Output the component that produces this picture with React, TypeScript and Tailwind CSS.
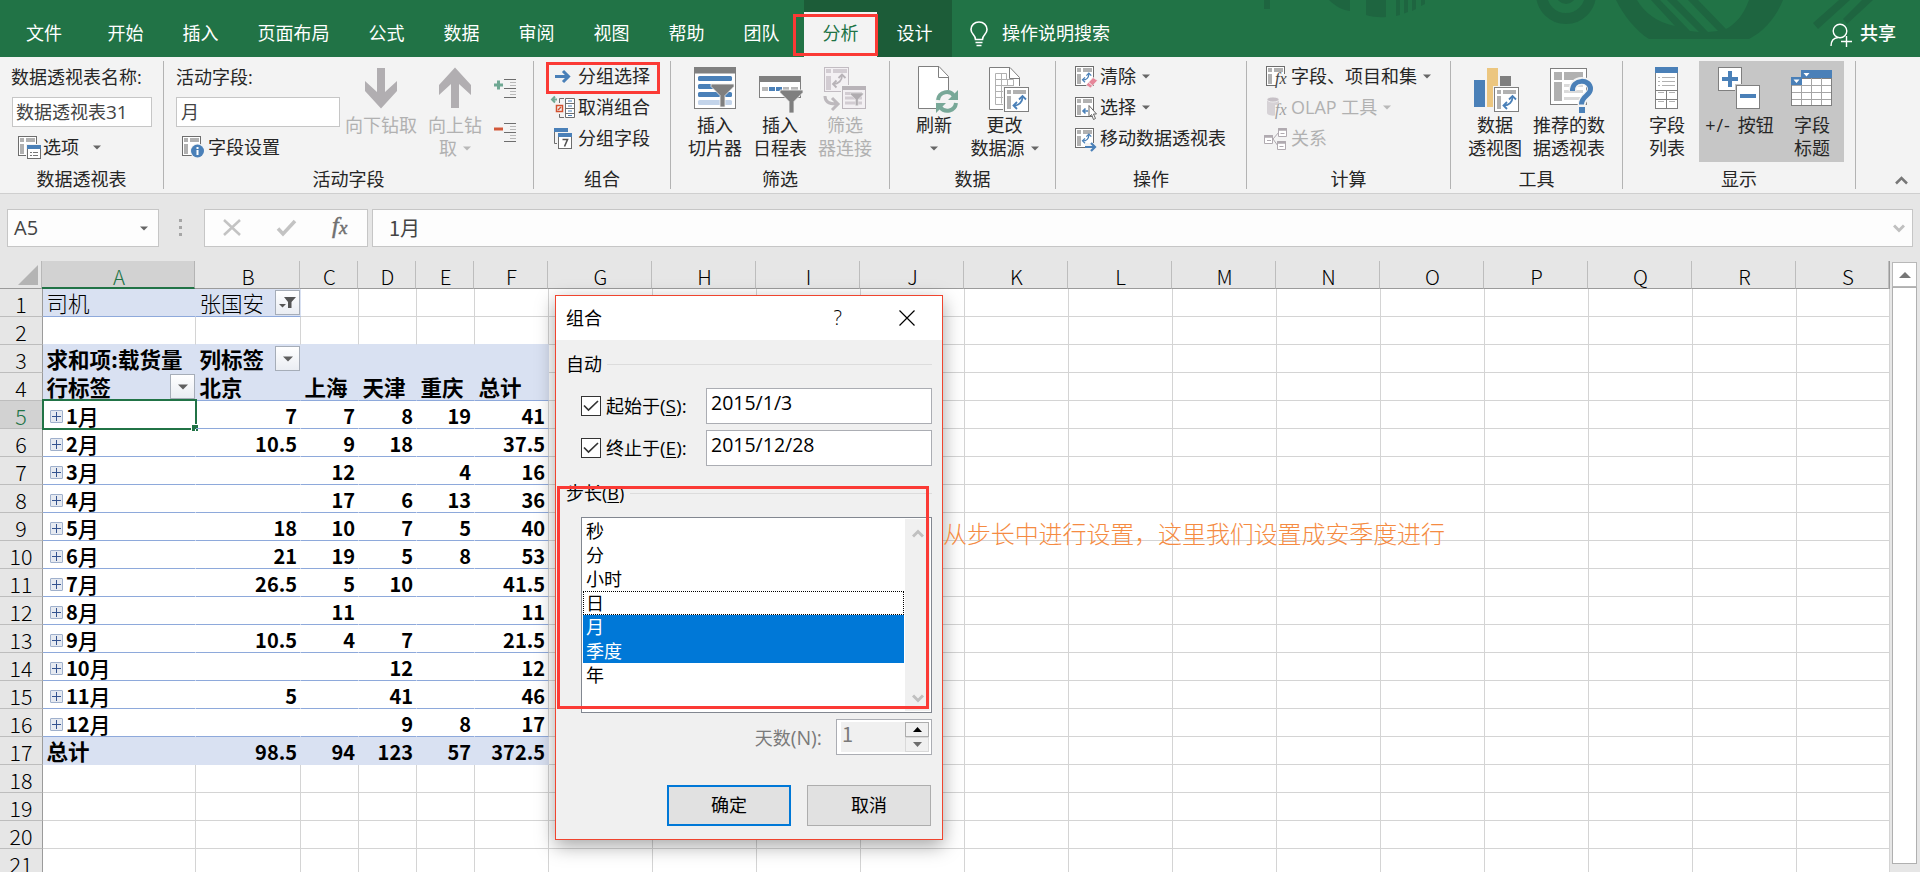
import React from "react";

const UI = "font-['Open_Sans','Noto_Sans_CJK_SC',sans-serif]";

/* ---------- small drawing helpers ---------- */

function Caret({ dim = false, className = "" }: { dim?: boolean; className?: string }) {
  return (
    <svg width="8" height="5" viewBox="0 0 8 5" className={className}>
      <path d="M0 0.5H8L4 4.5Z" fill={dim ? "#b8b8b8" : "#666"} />
    </svg>
  );
}

function Svg({ s = 24, children }: { s?: number; children: React.ReactNode }) {
  return (
    <svg width={s} height={s} viewBox={`0 0 ${s} ${s}`} fill="none" className="shrink-0 overflow-visible">
      {children}
    </svg>
  );
}

function PivotFrame() {
  return (
    <g>
      <rect x="0.5" y="1.5" width="18" height="19" fill="#fff" stroke="#6d6d6d" />
      <path d="M2 3h4v4H2zM8 3h9v4H8zM2 9h4v10H2z" fill="#b1b1b1" />
    </g>
  );
}

function Swap({ color = "#4a80b8", x = 0, y = 0, k = 1 }: { color?: string; x?: number; y?: number; k?: number }) {
  return (
    <g transform={`translate(${x} ${y}) scale(${k})`} stroke={color} strokeWidth="1.8" fill="none">
      <path d="M2 10.5C7 10.5 10.500 7 10.500 2" />
      <path d="M5 7L1.500 10.500L5 14M7 4.500L10.500 1L14 4.500" />
    </g>
  );
}

function Fx({ dim = false }: { dim?: boolean }) {
  return (
    <text x="9" y="19" fontSize="16" fontStyle="italic" fontFamily="Liberation Serif" fill={dim ? "#a0a0a0" : "#444"}>
      fx
    </text>
  );
}

function Funnel({ x, y, k = 1, fill = "#7f7f7f" }: { x: number; y: number; k?: number; fill?: string }) {
  return (
    <path
      transform={`translate(${x} ${y}) scale(${k})`}
      d="M0 0H23V2.500L14 11.500V23H9V11.500L0 2.500Z"
      fill={fill}
      stroke="#f3f3f3"
      strokeWidth="0.8"
    />
  );
}

/* ---------- small ribbon icons ---------- */

const OptionsIcon = () => (
  <Svg>
    <PivotFrame />
    <rect x="8" y="9" width="16" height="16" fill="#f3f3f3" />
    <rect x="9.500" y="10.500" width="13" height="13" fill="#fff" stroke="#6d6d6d" />
    <rect x="9" y="10" width="14" height="4" fill="#4a80b8" />
    <path d="M12 17.500h2M12 20.500h2M15 17.500h5M15 20.500h5" stroke="#777" />
  </Svg>
);
const FieldSettingsIcon = () => (
  <Svg>
    <PivotFrame />
    <circle cx="15.500" cy="16" r="7.500" fill="#f3f3f3" />
    <circle cx="15.500" cy="16" r="6.500" fill="#4a80b8" />
    <path d="M15.500 12v2M15.500 15v5" stroke="#fff" strokeWidth="2" />
  </Svg>
);
const GroupSelIcon = () => (
  <Svg>
    <path d="M4 11.500H17M12 6L17.500 11.500L12 17" stroke="#4a80b8" strokeWidth="3" />
  </Svg>
);
const UngroupIcon = () => (
  <Svg>
    <path d="M6 3.500H1M4 0.500L1 3.500L4 6.500" stroke="#6fa893" strokeWidth="2" />
    <rect x="5.500" y="9.500" width="6" height="6" stroke="#d2502f" strokeWidth="1.500" />
    <path d="M7 14l3-3" stroke="#d2502f" strokeWidth="1.500" />
    <path d="M13 2.500H8.500V7M8.500 18V21.500H13" stroke="#6d6d6d" />
    <path d="M14.500 2.500h9v19h-9zM14.500 7.500h9M14.500 12.500h9M14.500 17.500h9" fill="#fff" stroke="#6d6d6d" />
    <path d="M17 5h4M17 10h4M17 15h4M17 19.500h4" stroke="#4a80b8" strokeWidth="1.200" />
  </Svg>
);
const GroupFieldIcon = () => (
  <Svg>
    <path d="M6 16.500H3.500V3" stroke="#6d6d6d" />
    <rect x="3" y="1" width="14" height="4" fill="#4a80b8" />
    <rect x="6" y="5" width="16" height="17" fill="#f3f3f3" />
    <rect x="7.500" y="6.500" width="13" height="15" fill="#fff" stroke="#6d6d6d" />
    <rect x="7" y="6" width="14" height="4" fill="#4a80b8" />
    <path d="M11.500 12.500h5l-3 7" stroke="#555" strokeWidth="1.600" />
  </Svg>
);
const ClearIcon = () => (
  <Svg>
    <PivotFrame />
    <Swap x={6.500} y={7.500} k={0.700} />
    <path d="M11 20L18 12.500L22.500 15.500L15.500 23Z" fill="#e6879a" stroke="#f3f3f3" strokeWidth="0.700" />
    <path d="M13.500 17.300L17.500 20.700" stroke="#f3f3f3" />
  </Svg>
);
const SelectIcon = () => (
  <Svg>
    <PivotFrame />
    <path d="M8 15h5M10.500 12.500L8 15L10.500 17.500" stroke="#4a80b8" strokeWidth="1.600" />
    <path d="M14 9.500V21L16.500 18.500L18.500 23.500L20.500 22.500L18.500 18H21.500Z" fill="#fff" stroke="#666" />
  </Svg>
);
const MoveIcon = () => (
  <Svg>
    <PivotFrame />
    <Swap x={6.500} y={6.500} k={0.700} />
    <rect x="10" y="16" width="13" height="6" fill="#f3f3f3" />
    <path d="M10 20H19M16 16L20 20L16 24" stroke="#4a80b8" strokeWidth="2.200" />
  </Svg>
);
const CalcIcon = () => (
  <Svg>
    <PivotFrame />
    <rect x="10" y="9" width="10" height="13" fill="#f3f3f3" />
    <Fx />
  </Svg>
);
const OlapIcon = () => (
  <Svg>
    <path d="M1 4V17C1 20.500 13 20.500 13 17V4Z" fill="#d6d2d6" />
    <ellipse cx="7" cy="3.500" rx="6" ry="2.500" fill="#c6c0c6" stroke="#f3f3f3" strokeWidth="0.800" />
    <rect x="9" y="9" width="10" height="13" fill="#f3f3f3" />
    <Fx dim />
  </Svg>
);
const RelationIcon = () => (
  <Svg>
    <g stroke="#b0aab0">
      <path d="M7 12L13 5M7 12L12 19" />
      <path d="M-1.500 8.500h8v8h-8zM12.500 1.500h8v8h-8zM11.500 14.500h8v8h-8z" fill="#fff" />
      <path d="M-2 9.500h9M12 2.500h9M11 15.500h9" strokeWidth="2.500" />
      <path d="M1 13.500h4M14.500 6.500h4M13.500 19.500h4" />
    </g>
  </Svg>
);
function ExpandIcon({ plus = false }: { plus?: boolean }) {
  return (
    <svg width="22" height="20" viewBox="0 0 22 20" fill="none">
      {plus ? (
        <path d="M0 6H9M4.500 1.500V10.500" stroke="#6fa893" strokeWidth="3" />
      ) : (
        <path d="M0 6H9" stroke="#d2583a" strokeWidth="3" />
      )}
      <path d="M10 0.500H22M10 9.500H22M10 18.500H22" stroke="#6d6d6d" />
      <path d="M16 3.500H22M16 6.500H22M16 12.500H22M16 15.500H22" stroke="#b8b8b8" />
    </svg>
  );
}

/* ---------- large ribbon icons ---------- */

const DrillDown = () => (
  <Svg s={46}>
    <path d="M19 3h8v24l12-11v10L23 43.500L7 26V16l12 11Z" fill="#b1aeb1" />
  </Svg>
);
const DrillUp = () => (
  <Svg s={46}>
    <path d="M19 43h8V19l12 11V20L23 2.500L7 20v10l12-11Z" fill="#b1aeb1" />
  </Svg>
);
const SlicerIcon = () => (
  <Svg s={46}>
    <rect x="2.500" y="2.500" width="41" height="41" fill="#fff" stroke="#7f7f7f" />
    <rect x="2" y="2" width="42" height="6.500" fill="#7f7f7f" />
    <g fill="#4a80b8">
      <rect x="6" y="11" width="34" height="5" rx="1.500" />
      <rect x="6" y="19" width="34" height="5" rx="1.500" />
      <rect x="6" y="27" width="34" height="5" rx="1.500" />
    </g>
    <rect x="6" y="35" width="34" height="5" rx="1.500" fill="#c3d4ea" />
    <Funnel x={19} y={19} />
  </Svg>
);
const TimelineIcon = () => (
  <Svg s={46}>
    <rect x="2.500" y="11.500" width="41" height="21" fill="#fff" stroke="#7f7f7f" />
    <rect x="2" y="11" width="42" height="6" fill="#7f7f7f" />
    <path d="M5 22h6v4H5zM26 22h6v4h-6zM34 22h7v4h-7z" fill="#b8b8b8" />
    <path d="M12 22h6v4h-6zM19 22h6v4h-6z" fill="#4a80b8" />
    <Funnel x={23} y={25} />
  </Svg>
);
const FilterConnIcon = () => (
  <Svg s={46}>
    <rect x="2.500" y="2.500" width="24" height="24" fill="#f3f0f3" stroke="#c2bcc2" />
    <path d="M4 4h5v4H4zM11 4h14v4H11zM4 11h5v14H4z" fill="#d2ccd2" />
    <Swap x={9.500} y={8.500} color="#b8b3b8" />
    <rect x="19" y="20" width="26" height="25" fill="#f3f3f3" />
    <rect x="20.500" y="21.500" width="23" height="22" fill="#f3f0f3" stroke="#bcb6bc" />
    <rect x="20" y="21" width="24" height="4" fill="#b8b3b8" />
    <path d="M23 28.500h17M23 33h17M23 38h17" stroke="#d2ccd2" strokeWidth="3" />
    <Funnel x={28.500} y={28} k={0.550} fill="#b0acb0" />
    <path d="M3 31C3 37 7 39 14 39M10 33L16 39L10 45" stroke="#bdb9bd" strokeWidth="3" />
  </Svg>
);
const RefreshIcon = () => (
  <Svg s={46}>
    <path d="M7.500 1.500H28L37.500 11.500V43.500H7.500Z" fill="#fff" stroke="#7f7f7f" />
    <path d="M27.500 1.500V12.500H37.500" stroke="#7f7f7f" />
    <circle cx="36" cy="36.500" r="11.500" fill="#f3f3f3" />
    <g stroke="#78a898" strokeWidth="4">
      <path d="M27 35C28 26.500 39 24.500 43 31" />
      <path d="M45 38C44 46 34 48.500 29 42" />
    </g>
    <path d="M47 25V35H37ZM25 48V38H35Z" fill="#78a898" />
  </Svg>
);
const ChangeSourceIcon = () => (
  <Svg s={46}>
    <path d="M7.500 2.500H28L37.500 12.500V44.500H7.500Z" fill="#fff" stroke="#7f7f7f" />
    <path d="M27.500 2.500V13.500H37.500" stroke="#7f7f7f" />
    <path d="M13.500 8.500h11v6h7v25h-18zM13.500 14.500h12M13.500 20.500h18M13.500 26.500h18M13.500 32.500h18M19.500 8.500v30M25.500 14.500v24" stroke="#b1b1b1" />
    <rect x="21" y="21" width="27" height="27" fill="#f3f3f3" />
    <rect x="22.500" y="22.500" width="24" height="24" fill="#fff" stroke="#7f7f7f" />
    <path d="M25 25h4v4h-4zM31 25h13v4H31zM25 31h4v13h-4z" fill="#b1b1b1" />
    <Swap x={30} y={30} />
  </Svg>
);
const PivotChartIcon = () => (
  <Svg s={46}>
    <rect x="2" y="15" width="11" height="27" fill="#4a80b8" />
    <rect x="15" y="3" width="11" height="39" fill="#ecc67f" />
    <rect x="28" y="11" width="11" height="20" fill="#7f7f7f" />
    <rect x="21" y="21" width="27" height="27" fill="#f3f3f3" />
    <rect x="22.500" y="22.500" width="24" height="24" fill="#fff" stroke="#7f7f7f" />
    <path d="M25 25h4v4h-4zM31 25h13v4H31zM25 31h4v13h-4z" fill="#b1b1b1" />
    <Swap x={30} y={30} />
  </Svg>
);
const RecommendIcon = () => (
  <Svg s={46}>
    <rect x="4.500" y="3.500" width="36" height="36" fill="#fff" stroke="#7f7f7f" />
    <path d="M8 7h8v8H8zM18 7h19v8H18zM8 17h8v19H8z" fill="#b1b1b1" />
    <path d="M18 19h19v3H18zM18 25h19v3H18zM18 32h19v3H18z" fill="#dadada" />
    <path d="M26.500 26C26 12.500 45 13.500 45 24C45 31.500 35.500 30 35.500 41" stroke="#f3f3f3" strokeWidth="8" />
    <rect x="31" y="40" width="9" height="8" fill="#f3f3f3" />
    <path d="M26.500 26C26 13.500 44.500 13.500 44.500 24C44.500 31 35.500 30.500 35.500 39.500" stroke="#4a80b8" strokeWidth="5" />
    <rect x="33" y="42" width="6" height="6" fill="#4a80b8" />
  </Svg>
);
const FieldListIcon = () => (
  <Svg s={46}>
    <rect x="11.500" y="2.500" width="22" height="41" fill="#fff" stroke="#7f7f7f" />
    <rect x="11" y="2" width="23" height="6" fill="#4a80b8" />
    <path d="M14 12.500h2M18 12.500h13M14 16.500h2M18 16.500h13M14 20.500h2M18 20.500h13" stroke="#b1b1b1" />
    <path d="M11 25.500h23M11 34.500h23M22.500 25v19" stroke="#7f7f7f" />
    <path d="M14 27.500h6M25 27.500h6M14 36.500h6M25 36.500h6" stroke="#b1b1b1" />
  </Svg>
);
const PlusMinusIcon = () => (
  <Svg s={46}>
    <rect x="1.500" y="2.500" width="23" height="23" fill="#fff" stroke="#7f7f7f" />
    <path d="M5 14h16M13 6v16" stroke="#4a80b8" strokeWidth="4" />
    <rect x="18" y="19" width="25" height="25" fill="#c6c6c6" />
    <rect x="19.500" y="20.500" width="23" height="23" fill="#fff" stroke="#7f7f7f" />
    <path d="M23 31h16" stroke="#4a80b8" strokeWidth="4" />
  </Svg>
);
const FieldHeadersIcon = () => (
  <Svg s={46}>
    <rect x="2.500" y="13.500" width="40" height="27" fill="#fff" stroke="#7f7f7f" />
    <path d="M3 20.500h39M3 27.500h39M3 34.500h39M12.500 13v27M22.500 13v27M32.500 13v27" stroke="#a5a5a5" />
    <path d="M12 5h31v8H12zM2 12h11v8H2z" fill="#4a80b8" />
    <path d="M14.500 8h6l-3 3.500zM4.500 14.500h6l-3 3.500z" fill="#fff" />
  </Svg>
);

/* ---------- ribbon building blocks ---------- */

function Group({ w, label, children }: { w: string; label: string; children: React.ReactNode }) {
  return (
    <section className={`${w} flex h-[128px] shrink-0 flex-col border-r border-[#b3b3b3]`}>
      <div className="flex h-[108px]">{children}</div>
      <div className="h-5 text-center leading-[21px]">{label}</div>
    </section>
  );
}

function Big({ w, icon, lines, dim = false, caret = false }: {
  w: string; icon: React.ReactNode; lines: string[]; dim?: boolean; caret?: boolean;
}) {
  return (
    <div className={`${w} flex shrink-0 flex-col items-center pt-1 ${dim ? "text-[#b1b1b1]" : ""}`}>
      {icon}
      <div className="mt-[3px] flex flex-col items-center leading-[23px] whitespace-nowrap">
        {lines.map((l, i) => (
          <div key={i} className="flex h-[23px] items-center">
            {l}
            {caret && i === lines.length - 1 && <Caret dim={dim} className={l ? "ml-[6px]" : ""} />}
          </div>
        ))}
      </div>
    </div>
  );
}

function Small({ icon, text, gap = "w-[25px]", dim = false, caret = false }: {
  icon: React.ReactNode; text: string; gap?: string; dim?: boolean; caret?: boolean;
}) {
  return (
    <div className={`flex h-[31px] items-center whitespace-nowrap leading-[31px] ${dim ? "text-[#b1b1b1]" : ""}`}>
      <span className={`${gap} shrink-0`}>{icon}</span>
      {text}
      {caret && <Caret dim={dim} className="ml-[6px]" />}
    </div>
  );
}

/* ---------- title / tabs ---------- */

const TABS = ["开始", "插入", "页面布局", "公式", "数据", "审阅", "视图", "帮助", "团队"];

function TabBar() {
  return (
    <header className="relative h-[57px] shrink-0 bg-[#217346] text-white">
      <svg className="absolute left-[1240px] top-0" width="680" height="57" viewBox="1240 0 680 57" fill="none">
        <g fill="#1e6540">
          <path d="M1264 0h6v9h-6z" />
          <path d="M1329 0C1335 6 1342 10 1350 11V0Z" />
          <path d="M1366 0h20v17C1380 17.500 1372 17 1366 15Z" />
          <path d="M1396 0h4v15l-4 1zM1404 0h4v12l-4 1.500zM1412 0h4v9l-4 2zM1421 0h4v4l-4 2z" />
          <path d="M1616 0C1624 16 1636 31 1649 39H1749C1765 31 1776 17 1783 0H1749C1744 14 1736 24 1726 29L1698 0H1688L1718 31L1708 32L1677 0H1667L1699 32L1690 31L1660 0H1651L1675 26C1656 22 1644 12 1637 0Z" />
          <path d="M1813 23L1839 0H1850L1818 29ZM1843 19L1862 0H1873L1847 24Z" />
        </g>
        <circle cx="1566" cy="-6" r="24.500" stroke="#1e6540" strokeWidth="11" />
        <circle cx="1566" cy="-6" r="10" fill="#1e6540" />
      </svg>
      <nav className="flex h-[57px] items-stretch pt-3 leading-[43px]">
        <div className="w-[88px] text-center">文件</div>
        {TABS.map((t) => (
          <div key={t} className="px-[19.500px]">{t}</div>
        ))}
        <div className="-mt-3 ml-[5px] flex w-[148px] bg-[#1c5c38] pt-3">
          <div className="w-[73px] bg-[#f3f3f3] text-center text-[#217346]">分析</div>
          <div className="w-[75px] text-center">设计</div>
        </div>
        <div className="flex grow pl-[18px]">
          <svg width="18" height="26" viewBox="0 0 18 26" fill="none" className="mt-[9px]" stroke="#fff" strokeWidth="1.600">
            <path d="M5.500 18.500C5.500 13.500 1 13.500 1 8.500C1 4 4.500 1 9 1S17 4 17 8.500C17 13.500 12.500 13.500 12.500 18.500Z" />
            <path d="M5.500 21.500H12.500M6.500 24.500H11.500" />
          </svg>
          <div className="ml-[14px]">操作说明搜索</div>
        </div>
        <div className="flex pr-[24px] font-medium">
          <svg width="23" height="24" viewBox="0 0 23 24" fill="none" stroke="#fff" strokeWidth="1.400" className="mr-[7px] mt-[11px]">
            <circle cx="10" cy="8" r="6.800" />
            <path d="M1 23C1 18 4 15 8 14.500M16.500 13V24M11 18.500H22" />
          </svg>
          共享
        </div>
      </nav>
      <div className="absolute left-[793px] top-[14px] h-[42px] w-[85px] border-3 border-[#fb3a35]" />
    </header>
  );
}

function Ribbon() {
  return (
    <div className="relative flex h-[137px] shrink-0 border-b border-[#cfcfcf] bg-[#f3f3f3] pt-1 text-[#262626]">
      <Group w="w-[164px]" label="数据透视表">
        <div className="ml-[11px] w-[141px]">
          <div className="h-[31px] leading-[32px] whitespace-nowrap">数据透视表名称:</div>
          <div className="ml-px mt-[5px] h-[30px] border border-[#c6c6c6] bg-white pl-[3px] leading-[29px] text-[#444]">
            数据透视表<span className="text-[19px]">31</span>
          </div>
          <div className="flex h-10 items-center pl-[7px] leading-[39px]">
            <span className="w-[25px]"><OptionsIcon /></span>选项<Caret className="ml-[14px]" />
          </div>
        </div>
      </Group>
      <Group w="w-[370px]" label="活动字段">
        <div className="ml-3 w-[164px]">
          <div className="h-[31px] leading-[32px]">活动字段:</div>
          <div className="mt-[5px] h-[30px] border border-[#c6c6c6] bg-white pl-[4px] leading-[29px] text-[#444]">月</div>
          <div className="flex h-10 items-center pl-[6px] leading-[39px]">
            <span className="w-[26px]"><FieldSettingsIcon /></span>字段设置
          </div>
        </div>
        <div className="ml-[3px] flex">
          <Big w="w-[76px]" dim icon={<DrillDown />} lines={["向下钻取"]} />
          <Big w="w-[72px]" dim caret icon={<DrillUp />} lines={["向上钻", "取"]} />
        </div>
        <div className="ml-[3px] flex flex-col gap-6 pt-[18px]">
          <ExpandIcon plus />
          <ExpandIcon />
        </div>
      </Group>
      <Group w="w-[137px]" label="组合">
        <div className="ml-[17px]">
          <Small gap="w-[27px]" icon={<GroupSelIcon />} text="分组选择" />
          <Small gap="w-[27px]" icon={<UngroupIcon />} text="取消组合" />
          <Small gap="w-[27px]" icon={<GroupFieldIcon />} text="分组字段" />
        </div>
      </Group>
      <Group w="w-[219px]" label="筛选">
        <div className="ml-[11.500px] flex">
          <Big w="w-[65px]" icon={<SlicerIcon />} lines={["插入", "切片器"]} />
          <Big w="w-[65px]" icon={<TimelineIcon />} lines={["插入", "日程表"]} />
          <Big w="w-[65px]" dim icon={<FilterConnIcon />} lines={["筛选", "器连接"]} />
        </div>
      </Group>
      <Group w="w-[166px]" label="数据">
        <div className="ml-[9px] flex">
          <Big w="w-[70px]" caret icon={<RefreshIcon />} lines={["刷新", ""]} />
          <Big w="w-[71px]" caret icon={<ChangeSourceIcon />} lines={["更改", "数据源"]} />
        </div>
      </Group>
      <Group w="w-[191px]" label="操作">
        <div className="ml-[19px]">
          <Small caret icon={<ClearIcon />} text="清除" />
          <Small caret icon={<SelectIcon />} text="选择" />
          <Small icon={<MoveIcon />} text="移动数据透视表" />
        </div>
      </Group>
      <Group w="w-[204px]" label="计算">
        <div className="ml-[19px]">
          <Small caret icon={<CalcIcon />} text="字段、项目和集" />
          <Small dim caret icon={<OlapIcon />} text="OLAP 工具" />
          <Small dim icon={<RelationIcon />} text="关系" />
        </div>
      </Group>
      <Group w="w-[172px]" label="工具">
        <div className="ml-[7px] flex">
          <Big w="w-[74px]" icon={<PivotChartIcon />} lines={["数据", "透视图"]} />
          <Big w="w-[74px]" icon={<RecommendIcon />} lines={["推荐的数", "据透视表"]} />
        </div>
      </Group>
      <Group w="w-[233px]" label="显示">
        <div className="ml-3 flex">
          <Big w="w-[64px]" icon={<FieldListIcon />} lines={["字段", "列表"]} />
          <div className="flex h-[101px] bg-[#c6c6c6]">
            <div className="flex w-[81px] shrink-0 flex-col items-center pt-1">
              <PlusMinusIcon />
              <div className="mt-[3px] flex leading-[23px] whitespace-nowrap">
                <span className="mr-[7px] tracking-[0.900px]">+/-</span>按钮
              </div>
            </div>
            <Big w="w-[64px]" icon={<FieldHeadersIcon />} lines={["字段", "标题"]} />
          </div>
        </div>
      </Group>
      <div className="flex grow items-end justify-end pb-[8px] pr-[12px]">
        <svg width="13" height="9" viewBox="0 0 13 9" fill="none">
          <path d="M1 7.500L6.500 2L12 7.500" stroke="#777" strokeWidth="2.500" />
        </svg>
      </div>
      <div className="absolute left-[546px] top-[5px] h-[32px] w-[114px] border-3 border-[#fb3a35]" />
    </div>
  );
}

function FormulaBar() {
  return (
    <div className="flex h-[67px] shrink-0 items-start bg-[#e6e6e6] pl-[7px] pt-[15px] text-[#444]">
      <div className="flex h-[38px] w-[152px] items-center justify-between border border-[#c6c6c6] bg-[#fdfdfd] pl-[6px] pr-[10px] text-[20px]">
        A5
        <Caret />
      </div>
      <div className="ml-[20px] mt-[10px] flex w-[3px] flex-col gap-1">
        <i className="h-[3px] bg-[#a6a6a6]" />
        <i className="h-[3px] bg-[#a6a6a6]" />
        <i className="h-[3px] bg-[#a6a6a6]" />
      </div>
      <div className="ml-[22px] flex h-[38px] w-[164px] items-center border border-[#c6c6c6] bg-[#fdfdfd]">
        <svg width="162" height="36" viewBox="0 0 162 36" fill="none">
          <path d="M19 10L35 25M35 10L19 25" stroke="#c3c3c3" strokeWidth="2.500" />
          <path d="M73 18.500L78 24L90 11" stroke="#c3c3c3" strokeWidth="3.500" />
          <text x="127" y="23" fontSize="24" fontStyle="italic" fontFamily="Liberation Serif" fill="#707070" stroke="#707070" strokeWidth="0.500">f</text>
          <text x="134" y="24" fontSize="19" fontStyle="italic" fontFamily="Liberation Serif" fill="#707070" stroke="#707070" strokeWidth="0.500">x</text>
        </svg>
      </div>
      <div className="ml-1 flex h-[38px] w-[1541px] items-center justify-between border border-[#c6c6c6] bg-[#fdfdfd] pl-[16px] pr-[7px]">
        <span className="font-['Noto_Sans_CJK_SC',sans-serif] text-[20px] leading-[34px]">1月</span>
        <svg width="12" height="9" viewBox="0 0 12 9" fill="none">
          <path d="M1 1.500L6 6.500L11 1.500" stroke="#c0c0c0" strokeWidth="3" />
        </svg>
      </div>
    </div>
  );
}

/* ---------- worksheet ---------- */

const COLS: { id: string; w: string }[] = [
  { id: "A", w: "w-[153px]" },
  { id: "B", w: "w-[105px]" },
  { id: "C", w: "w-[58px]" },
  { id: "D", w: "w-[58px]" },
  { id: "E", w: "w-[58px]" },
  { id: "F", w: "w-[74px]" },
  ..."GHIJKLMNOPQR".split("").map((id) => ({ id, w: "w-[104px]" })),
  { id: "S", w: "w-[93px]" },
];

const DATA: Record<number, string[]> = {
  1: ["司机", "张国安"],
  3: ["求和项:载货量", "列标签"],
  4: ["行标签", "北京", "上海", "天津", "重庆", "总计"],
  5: ["1月", "7", "7", "8", "19", "41"],
  6: ["2月", "10.5", "9", "18", "", "37.5"],
  7: ["3月", "", "12", "", "4", "16"],
  8: ["4月", "", "17", "6", "13", "36"],
  9: ["5月", "18", "10", "7", "5", "40"],
  10: ["6月", "21", "19", "5", "8", "53"],
  11: ["7月", "26.5", "5", "10", "", "41.5"],
  12: ["8月", "", "11", "", "", "11"],
  13: ["9月", "10.5", "4", "7", "", "21.5"],
  14: ["10月", "", "", "12", "", "12"],
  15: ["11月", "5", "", "41", "", "46"],
  16: ["12月", "", "", "9", "8", "17"],
  17: ["总计", "98.5", "94", "123", "57", "372.5"],
};

function cellBorder(r: number, c: number): string {
  if (r === 1 && c < 2) return "bg-[#d9e1f2] border-b-[#8ea9db] border-r-[#d9e1f2]";
  if ((r === 3 || r === 17) && c < 6) return "bg-[#d9e1f2] border-[#d9e1f2]";
  if (r === 4 && c < 6) return "bg-[#d9e1f2] border-b-[#8ea9db] border-r-[#d9e1f2]";
  if (r === 2 && c < 6) return "border-b-[#d9e1f2] border-r-[#d4d4d4]";
  if (r >= 5 && r <= 16 && c < 5) return "border-b-[#8ea9db] border-r-white";
  if (r >= 5 && r <= 16 && c === 5) return "border-b-[#8ea9db] border-r-[#d4d4d4]";
  return "border-[#d4d4d4]";
}

function DropButton({ filtered = false }: { filtered?: boolean }) {
  return (
    <span className="ml-auto mt-[1px] flex h-[25px] w-[25px] shrink-0 items-center justify-center border border-[#a6adb8] bg-linear-to-b from-white to-[#eaedf3]">
      {filtered ? (
        <svg width="17" height="14" viewBox="0 0 17 14">
          <path d="M5 1H17L12.500 6V12H9V6Z" fill="#555" />
          <path d="M0 8H7L3.500 11.500Z" fill="#555" />
        </svg>
      ) : (
        <svg width="10" height="6" viewBox="0 0 10 6"><path d="M0 0.500H10L5 5.500Z" fill="#5f5f5f" /></svg>
      )}
    </span>
  );
}

function Cell({ r, c }: { r: number; c: number }) {
  const text = DATA[r]?.[c] ?? "";
  const base = `relative flex h-7 shrink-0 whitespace-nowrap border-b ${COLS[c].w} ${cellBorder(r, c)} border-r`;
  if (r >= 5 && r <= 16 && c === 0) {
    return (
      <div className={`${base} pl-[7px] font-bold`}>
        <span className="mt-[9px] flex h-[13px] w-[13px] items-center justify-center rounded-[1px] border border-[#9fb0cc] bg-[#e6eaf1]">
          <svg width="9" height="9" viewBox="0 0 9 9"><path d="M0 4.500H9M4.500 0V9" stroke="#33528f" /></svg>
        </span>
        <span className="ml-[3px] text-[20px] leading-[30px]">{text.replace("月", "")}</span>
        <span className="text-[21px] font-medium leading-[30px]">月</span>
        {r === 5 && (
          <>
            <span className="absolute -left-px -top-[2px] h-[31px] w-[155px] border-2 border-[#217346]" />
            <span className="absolute -right-[3px] top-[23px] h-[7px] w-[7px] border-l border-t border-white bg-[#217346]" />
          </>
        )}
      </div>
    );
  }
  if (r >= 5 && c > 0) {
    return <div className={`${base} justify-end pr-[3px] text-[20px] font-bold leading-[30px]`}>{text}</div>;
  }
  return (
    <div className={`${base} pl-[3.500px] text-[21.500px] leading-[28px] ${r > 1 ? "font-bold" : "font-light"}`}>
      {text}
      {r === 1 && c === 1 && <DropButton filtered />}
      {((r === 3 && c === 1) || (r === 4 && c === 0)) && <DropButton />}
    </div>
  );
}

function Sheet() {
  const rows = Array.from({ length: 21 }, (_, i) => i + 1);
  return (
    <div className="flex grow overflow-hidden bg-[#e6e6e6] font-['Noto_Sans_CJK_SC',sans-serif] text-black">
      <div className="w-[1890px] shrink-0 border-r border-[#9b9b9b]">
        <div className="flex h-7 text-[20.500px] leading-[31px]">
          <div className="flex w-[43px] items-end justify-end border-b border-r border-[#9b9b9b] border-r-[#b8b8b8] pb-[3px] pr-[3px]">
            <svg width="20" height="20" viewBox="0 0 20 20"><path d="M20 0V20H0Z" fill="#b4b4b4" /></svg>
          </div>
          {COLS.map((c) => (
            <div
              key={c.id}
              className={`${c.w} shrink-0 border-b border-r text-center font-light ${c.id === "S" ? "pl-[12px]" : "pl-[2px]"} ${
                c.id === "A" ? "border-b-2 border-b-[#217346] border-r-[#b4b4b4] bg-[#d2d2d2] text-[#217346]" : "border-b-[#9b9b9b] border-r-[#bdbdbd]"
              }`}
            >
              {c.id}
            </div>
          ))}
        </div>
        {rows.map((r) => (
          <div key={r} className="flex h-7 bg-white">
            <div
              className={`w-[43px] shrink-0 border-b border-r border-b-[#bdbdbd] border-r-[#9b9b9b] text-center text-[21.500px] font-light leading-[30px] ${
                r === 5 ? "bg-[#d2d2d2] text-[#217346]" : "bg-[#e6e6e6]"
              }`}
            >
              {r}
            </div>
            {COLS.map((c, i) => (
              <Cell key={c.id} r={r} c={i} />
            ))}
          </div>
        ))}
      </div>
      <div className="ml-[2px] flex w-[25px] flex-col pt-[1px]">
        <div className="flex h-[25px] items-center justify-center border border-[#b8b8b8] bg-white">
          <svg width="12" height="6" viewBox="0 0 12 6"><path d="M0 6H12L6 0Z" fill="#777" /></svg>
        </div>
        <div className="h-[577px] border border-[#b0b0b0] bg-white" />
      </div>
    </div>
  );
}

/* ---------- dialog ---------- */

function CheckRow({ label, k, value }: { label: string; k: string; value: string }) {
  return (
    <div className="flex h-9 items-center pl-[25px]">
      <span className="flex h-5 w-5 items-center justify-center border border-[#333] bg-white">
        <svg width="16" height="12" viewBox="0 0 16 12" fill="none"><path d="M1 5.500L5.500 10L15 1" stroke="#333" strokeWidth="1.700" /></svg>
      </span>
      <span className="ml-[5px] w-[100px] whitespace-nowrap">
        {label}<span className="text-[19px]">(<u className="underline-offset-2">{k}</u>):</span>
      </span>
      <span className="h-9 w-[226px] border border-[#abadb3] bg-white pl-[4px] text-[19.500px] leading-[27px]">{value}</span>
    </div>
  );
}

const STEPS = ["秒", "分", "小时", "日", "月", "季度", "年"];

function stepClass(s: string): string {
  if (s === "月" || s === "季度") return "bg-[#0078d7] text-white border-[#0078d7]";
  if (s === "日") return "border-black border-dotted";
  return "border-transparent";
}

function Dialog() {
  return (
    <div className="absolute left-[555px] top-[295px] h-[545px] w-[388px] border border-[#f0452f] bg-[#f0f0f0] text-black shadow-[0_6px_18px_rgba(0,0,0,0.35)]">
      <div className="flex h-[44px] items-center bg-white pl-[10px]">
        <span className="leading-[42px]">组合</span>
        <span className="ml-auto text-[20px] font-light leading-[42px]">?</span>
        <svg width="16" height="16" viewBox="0 0 16 16" className="ml-[57px] mr-[27px]"><path d="M0.500 0.500L15.500 15.500M15.500 0.500L0.500 15.500" stroke="#000" strokeWidth="1.200" /></svg>
      </div>
      <div className="mt-[12px] flex h-6 items-center pl-[10px] pr-[10px] leading-6">
        自动<span className="ml-[5px] h-px grow bg-[#dcdcdc]" />
      </div>
      <div className="mt-[12px] flex flex-col gap-[6px]">
        <CheckRow label="起始于" k="S" value="2015/1/3" />
        <CheckRow label="终止于" k="E" value="2015/12/28" />
      </div>
      <div className="mt-[15px] flex h-6 items-center pl-[10px] pr-[10px] leading-6">
        步长(<u className="underline-offset-2">B</u>)<span className="ml-[6px] h-px grow bg-[#dcdcdc]" />
      </div>
      <div className="ml-[25px] mt-[12px] flex h-[196px] w-[351px] border border-[#828790] bg-white p-px">
        <div className="w-[321px]">
          {STEPS.map((s) => (
            <div key={s} className={`h-6 border pl-[2px] leading-[22px] ${stepClass(s)}`}>{s}</div>
          ))}
        </div>
        <div className="ml-[1px] flex grow flex-col items-center justify-between bg-[#f0f0f0] pb-2 pt-[10px]">
          <svg width="12" height="9" viewBox="0 0 12 9" fill="none"><path d="M1 7.500L6 2.500L11 7.500" stroke="#c0c0c0" strokeWidth="3" /></svg>
          <svg width="12" height="9" viewBox="0 0 12 9" fill="none"><path d="M1 1.500L6 6.500L11 1.500" stroke="#c0c0c0" strokeWidth="3" /></svg>
        </div>
      </div>
      <div className="mt-[6px] flex h-9 items-center justify-end pr-[10px] text-[#7a7a7a]">
        <span className="mr-[14px] pt-[2px]">天数<span className="text-[19.500px]">(N):</span></span>
        <div className="flex h-9 w-[96px] border border-[#abadb3] bg-white py-[2px] pl-[4px] pr-[2px]">
          <div className="grow bg-[#f0f0f0] pl-px font-['Noto_Sans_CJK_SC',sans-serif] text-[20px] leading-[23px]">1</div>
          <div className="flex w-6 flex-col">
            <div className="flex h-[15px] items-center justify-center border border-[#adadad] bg-[#f0f0f0]">
              <svg width="9" height="5" viewBox="0 0 9 5"><path d="M0 5H9L4.500 0Z" fill="#000" /></svg>
            </div>
            <div className="flex h-[15px] items-center justify-center border border-[#d9d9d9] bg-[#f0f0f0]">
              <svg width="9" height="5" viewBox="0 0 9 5"><path d="M0 0H9L4.500 5Z" fill="#6d6d6d" /></svg>
            </div>
          </div>
        </div>
      </div>
      <div className="mt-[30px] flex justify-end gap-4 pr-[11px] text-center">
        <div className="h-[41px] w-[124px] border-2 border-[#0078d7] bg-[#e1e1e1] leading-[36px]">确定</div>
        <div className="h-[41px] w-[124px] border border-[#adadad] bg-[#e1e1e1] leading-[38px]">取消</div>
      </div>
      <div className="absolute left-[1px] top-[190px] h-[223px] w-[372px] border-3 border-[#fb3a35]" />
    </div>
  );
}

export default function App() {
  return (
    <div className={`relative flex h-[872px] w-[1920px] flex-col overflow-hidden bg-[#e6e6e6] text-[18px] ${UI}`}>
      <TabBar />
      <Ribbon />
      <FormulaBar />
      <Sheet />
      <Dialog />
      <div className="absolute left-[943px] top-[516px] whitespace-nowrap font-['Noto_Sans_CJK_SC',sans-serif] text-[24px] font-light leading-[34px] tracking-[-0.100px] text-[#f58b42]">
        从步长中进行设置，这里我们设置成安季度进行
      </div>
    </div>
  );
}
